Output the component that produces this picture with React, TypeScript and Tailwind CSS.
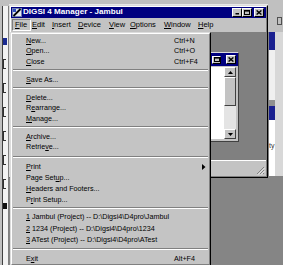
import React from "react";

type Item = { label: string; u?: number; keys?: string; h: string; arrow?: boolean };
type Sep = { sep: string };
type Row = Item | Sep;

const rows: Row[] = [
  { label: "New...", u: 0, keys: "Ctrl+N", h: "h-[10.5px]" },
  { label: "Open...", u: 0, keys: "Ctrl+O", h: "h-[10.5px]" },
  { label: "Close", u: 0, keys: "Ctrl+F4", h: "h-[10.5px]" },
  { sep: "h-[7.5px]" },
  { label: "Save As...", u: 0, h: "h-[10.5px]" },
  { sep: "h-[7.5px]" },
  { label: "Delete...", u: 0, h: "h-[10.5px]" },
  { label: "Rearrange...", u: 1, h: "h-[10.5px]" },
  { label: "Manage...", u: 0, h: "h-[10.5px]" },
  { sep: "h-[7.5px]" },
  { label: "Archive...", u: 0, h: "h-[10.5px]" },
  { label: "Retrieve...", u: 6, h: "h-[11px]" },
  { sep: "h-[9px]" },
  { label: "Print", u: 0, h: "h-[11px]", arrow: true },
  { label: "Page Setup...", u: 8, h: "h-[11px]" },
  { label: "Headers and Footers...", u: 0, h: "h-[11px]" },
  { label: "Print Setup...", u: 1, h: "h-[11px]" },
  { sep: "h-[5.5px]" },
  { label: "1 Jambul (Project) -- D:\\Digsi4\\D4pro\\Jambul", u: 0, h: "h-[11.5px]" },
  { label: "2 1234 (Project) -- D:\\Digsi4\\D4pro\\1234", u: 0, h: "h-[11.5px]" },
  { label: "3 ATest (Project) -- D:\\Digsi4\\D4pro\\ATest", u: 0, h: "h-[11.5px]" },
  { sep: "h-[7.5px]" },
  { label: "Exit", u: 1, keys: "Alt+F4", h: "h-[11px]" },
];

const menuBar = [
  { label: "Edit", w: "w-[21px] pl-[1px]" },
  { label: "Insert", w: "w-[26px]" },
  { label: "Device", w: "w-[31px]" },
  { label: "View", w: "w-[21px]" },
  { label: "Options", w: "w-[34px]" },
  { label: "Window", w: "w-[34px]" },
  { label: "Help", w: "w-[20px]" },
];

function Mn({ text, u }: { text: string; u?: number }) {
  if (u === undefined) return <>{text}</>;
  return (
    <>
      {text.slice(0, u)}
      <span className="underline decoration-1 underline-offset-[1px]">{text[u]}</span>
      {text.slice(u + 1)}
    </>
  );
}

function CapButton({ children, small }: { children: React.ReactNode; small?: boolean }) {
  return (
    <div
      className={`${small ? "w-[9px] h-[8px]" : "w-[10px] h-[9px]"} flex items-center justify-center bg-[#c3c3c3] border border-t-white border-l-white border-r-black border-b-black`}
    >
      {children}
    </div>
  );
}

const MinGlyph = () => (
  <svg width="5" height="5" viewBox="0 0 5 5">
    <rect x="0.5" y="3" width="3.5" height="1.5" fill="#000" />
  </svg>
);
const MaxGlyph = () => (
  <svg width="6" height="5" viewBox="0 0 6 5">
    <rect x="0.5" y="0.5" width="5" height="4" fill="none" stroke="#000" strokeWidth="1" />
    <rect x="0" y="0" width="6" height="1.6" fill="#000" />
  </svg>
);
const CloseGlyph = () => (
  <svg width="6" height="5" viewBox="0 0 6 5">
    <path d="M0.6 0.4 L5.4 4.6 M5.4 0.4 L0.6 4.6" stroke="#000" strokeWidth="1.3" />
  </svg>
);

function FileMenu() {
  return (
    <div className="absolute left-[-1px] top-[14px] w-[201px] border border-t-[#dcdcdc] border-l-[#dcdcdc] border-r-black border-b-black bg-[#c4c4c4] z-10">
      <div className="border border-t-white border-l-white border-r-[#808080] border-b-[#808080] pt-[1px] text-[7.2px] leading-none text-black">
        {rows.map((r, i) =>
          "sep" in r ? (
            <div key={i} className={`flex flex-col justify-center px-[1px] ${r.sep}`}>
              <div className="h-[1px] bg-[#808080]" />
              <div className="h-[1px] bg-white" />
            </div>
          ) : (
            <div key={i} className={`flex items-center pl-[14px] ${r.h}`}>
              <span className="w-[148px] whitespace-nowrap">
                <Mn text={r.label} u={r.u} />
              </span>
              <span className="w-[28px] whitespace-nowrap">{r.keys}</span>
              {r.arrow && (
                <svg width="4" height="6" viewBox="0 0 4 6">
                  <path d="M0 0 L3.5 3 L0 6 Z" fill="#000" />
                </svg>
              )}
            </div>
          )
        )}
      </div>
    </div>
  );
}

function ChildWindow() {
  return (
    <div className="w-[100px] h-[90px] flex flex-col bg-[#c3c3c3] border border-t-[#dcdcdc] border-l-[#dcdcdc] border-r-[#404040] border-b-[#404040]">
      <div className="h-[13px] bg-[#000080] flex items-center justify-end gap-[2px] pr-[2px]">
        <CapButton small>
          <MaxGlyph />
        </CapButton>
        <div className="w-[1px]" />
        <CapButton>
          <CloseGlyph />
        </CapButton>
      </div>
      <div className="flex-1 flex p-[1px] pr-[2px] pb-[2px]">
        <div className="flex-1 bg-white" />
        <div className="w-[12px] bg-white flex flex-col">
          <div className="h-[10px] bg-[#c3c3c3] border border-t-white border-l-white border-r-[#404040] border-b-[#404040] flex items-center justify-center">
            <svg width="5" height="3" viewBox="0 0 5 3">
              <path d="M2.5 0 L5 3 L0 3 Z" fill="#000" />
            </svg>
          </div>
          <div className="h-[29px] bg-[#c3c3c3] border border-t-white border-l-white border-r-[#404040] border-b-[#404040]" />
          <div className="flex-1 bg-[#e4e4e4]" />
          <div className="h-[10px] bg-[#c3c3c3] border border-t-white border-l-white border-r-[#404040] border-b-[#404040] flex items-center justify-center">
            <svg width="5" height="3" viewBox="0 0 5 3">
              <path d="M0 0 L5 0 L2.5 3 Z" fill="#000" />
            </svg>
          </div>
        </div>
      </div>
    </div>
  );
}

function MainWindow() {
  return (
    <div className="h-[173px] border border-t-[#dcdcdc] border-l-[#dcdcdc] border-r-black border-b-black bg-[#c3c3c3]">
      <div className="h-full flex flex-col border border-t-white border-l-white border-r-[#808080] border-b-[#808080]">
        <div className="h-[11px] bg-[#000080] flex items-center pl-[1px] pr-[2px]">
          <svg width="10" height="9" viewBox="0 0 10 9">
            <rect x="0.5" y="0.5" width="9" height="8" fill="#e8e8f0" stroke="#7080b0" strokeWidth="1" />
            <rect x="1" y="1" width="3" height="3" fill="#3050c0" />
            <path d="M1.5 8 L8.5 1" stroke="#000" strokeWidth="1.8" />
          </svg>
          <span className="ml-[1px] flex-1 text-[8.1px] font-bold leading-none text-white whitespace-nowrap">
            DIGSI 4 Manager - Jambul
          </span>
          <CapButton>
            <MinGlyph />
          </CapButton>
          <CapButton>
            <MaxGlyph />
          </CapButton>
          <div className="w-[2px]" />
          <CapButton>
            <CloseGlyph />
          </CapButton>
        </div>
        <div className="relative flex-1 flex flex-col">
          <div className="h-[14px] flex items-center pl-[1px] text-[7.5px] leading-none text-black">
            <span className="w-[19px] h-[12px] flex items-center pl-[2px] border border-t-[#808080] border-l-[#808080] border-r-white border-b-white">
              <Mn text="File" u={0} />
            </span>
            {menuBar.map((m) => (
              <span key={m.label} className={`${m.w} whitespace-nowrap`}>
                <Mn text={m.label} u={0} />
              </span>
            ))}
          </div>
          <div className="h-[128px] bg-[#808080] flex justify-end pt-[20px] pr-[27px]">
            <ChildWindow />
          </div>
          <div className="flex-1 border-t border-white flex items-end justify-end pr-[1px] pb-[1px]">
            <svg width="9" height="9" viewBox="0 0 9 9">
              <path d="M8 1 L1 8 M8 4 L4 8 M8 7 L7 8" stroke="#808080" strokeWidth="1" />
              <path d="M8.8 1.8 L1.8 8.8 M8.8 4.8 L4.8 8.8" stroke="#ffffff" strokeWidth="0.7" />
            </svg>
          </div>
          <FileMenu />
        </div>
      </div>
    </div>
  );
}

function LeftStrip() {
  return (
    <div className="w-[9px] flex flex-col bg-[#c0c0c0]">
      <div className="h-[6px]" />
      <div className="flex-1 flex">
        <div className="w-[2px]" />
        <div className="w-[1px] bg-[#404040]" />
        <div className="flex-1 bg-[#f2f2f2] flex flex-col gap-[14px] pt-[32px]">
          <div className="h-[7px] w-[4px] bg-[#1a2a90]" />
          <div className="h-[10px] w-[3px] border-l border-t border-b border-[#303030]" />
          <div className="h-[10px] w-[3px] border-l border-t border-b border-[#303030]" />
          <div className="h-[10px] w-[3px] border-l border-t border-b border-[#303030]" />
          <div className="h-[10px] w-[3px] border-l border-t border-b border-[#303030]" />
          <div className="h-[10px] w-[3px] border-l border-t border-b border-[#303030]" />
          <div className="h-[10px] w-[3px] border-l border-t border-b border-[#303030]" />
          <div className="h-[6px] w-[4px] bg-[#101010]" />
        </div>
        <div className="w-[1px] bg-[#808080]" />
      </div>
    </div>
  );
}

function RightStrip() {
  return (
    <div className="w-[15px] flex flex-col bg-[#c0c0c0]">
      <div className="h-[32px] pt-[17px] pl-[9px]">
        <div className="w-[5px] h-[8px] border border-[#505050]" />
      </div>
      <div className="h-[144px] flex">
        <div className="w-[1px] bg-[#808080]" />
        <div className="w-[6px] flex flex-col bg-white">
          <div className="h-[18px] bg-[#1a2090]" />
          <div className="h-[50px] bg-[#f0f0f0]" />
          <div className="h-[6px] bg-[#909090]" />
          <div className="h-[14px] bg-[#1a2090]" />
          <div className="flex-1 bg-white pt-[22px] text-[7px] leading-none text-[#333] whitespace-nowrap">
            ty
          </div>
        </div>
        <div className="flex-1 bg-[#d8d8d8]" />
      </div>
      <div className="flex-1 bg-[#858585]" />
    </div>
  );
}

export default function App() {
  return (
    <div className="w-[283px] h-[265px] overflow-hidden flex bg-[#c0c0c0] font-['Liberation_Sans',Arial,sans-serif]">
      <LeftStrip />
      <div className="w-[259px] flex flex-col">
        <div className="h-[5px] border-b border-[#e8e8e8]" />
        <MainWindow />
        <div className="flex-1 bg-[#858585]" />
      </div>
      <RightStrip />
    </div>
  );
}
